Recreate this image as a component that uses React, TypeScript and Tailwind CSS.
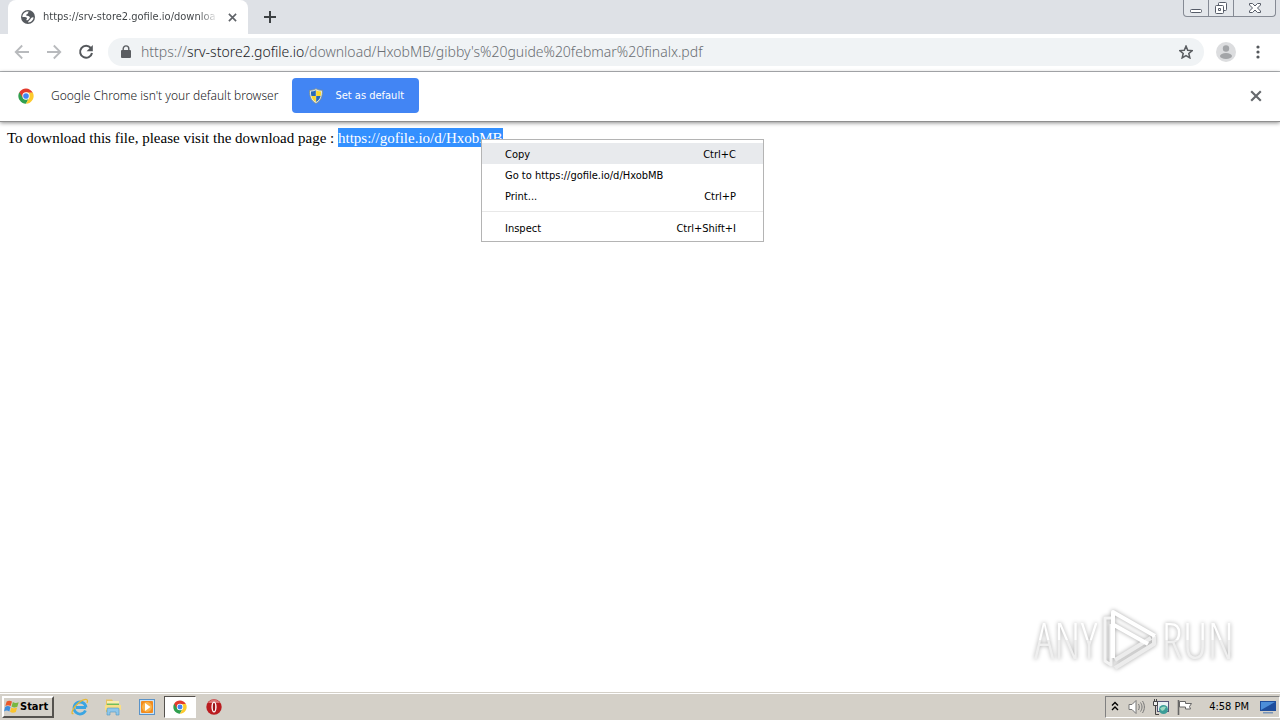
import React from "react";

const UI = "font-['DejaVu_Sans_Condensed','Noto_Sans',sans-serif]";

function ChromeLogo({ className }: { className: string }) {
  return (
    <svg viewBox="0 0 48 48" className={className} aria-hidden="true">
      <path d="M4.1 12.5A23 23 0 0 0 24 47L33.5 29.5 24 24Z" fill="#30a04f" />
      <path d="M43.9 12.5H24L33.5 29.5 24 47A23 23 0 0 0 43.9 12.5Z" fill="#fdca2e" />
      <path d="M4.1 12.5A23 23 0 0 1 43.9 13.5H24L14 29.5Z" fill="#e33b2e" />
      <circle cx="24" cy="24" r="11" fill="#fff" />
      <circle cx="24" cy="24" r="8.5" fill="#4285f4" />
    </svg>
  );
}

function Shield() {
  return (
    <svg viewBox="0 0 16 16" className="size-4" aria-hidden="true">
      <path d="M8 .6C6 2 4 2.3 1.6 2.2 1.2 8 3 13 8 15.5 13 13 14.8 8 14.4 2.2 12 2.3 10 2 8 .6Z" fill="#dfe7ea" stroke="#7c8b83" strokeWidth=".8" />
      <path d="M7.8 2.2C6.3 3 4.8 3.4 3 3.4c-.1 1.8 0 3.2.4 4.6h4.4Z" fill="#2868b8" />
      <path d="M8.2 2.2C9.7 3 11.2 3.4 13 3.4c.1 1.8 0 3.2-.4 4.6H8.2Z" fill="#fcd72b" />
      <path d="M3.4 8c.8 2.8 2 4.6 4.4 6V8Z" fill="#fcd72b" />
      <path d="M12.6 8c-.8 2.8-2 4.6-4.4 6V8Z" fill="#2868b8" />
    </svg>
  );
}

function Close({ className }: { className: string }) {
  return (
    <svg viewBox="0 0 10 10" className={className} fill="none" stroke="currentColor" strokeWidth="1.8" aria-hidden="true">
      <path d="m1 1 8 8M9 1 1 9" />
    </svg>
  );
}

function TabStrip() {
  return (
    <header className="flex h-[34px] items-start bg-[#dee1e6] pl-2 pr-1">
      <div className="flex h-[34px] w-60 items-center rounded-t-lg bg-white pl-3 pr-[11px]">
        <svg viewBox="0 0 16 16" className="size-4 shrink-0" aria-hidden="true">
          <circle cx="8" cy="8" r="7" fill="#565a5f" />
          <path d="M8.6 2.6C5.400 2 2.400 4.600 2.400 8c1.600.4 3.600-.2 4.400.8.6.8-.4 1.400-.4 2-.1.400.500.600.800.500 1.800-.3 1.300-2.300 2.800-2.400-.2-1.500-1.600-2.300-3.200-2.200-.9-.3-.8-1.200.1-1.500.8-.3 1.200-.7 1.100-1.400.1-.4.900-.5.600-1.200Z" fill="#fff" />
          <path d="M13.500 8.300c-1.300.3-1.700.1-2.500 1-.6.7-1 1.800-2 2.400-.6.400-.9.800-.7 1.800 3-.1 5.200-2.400 5.200-5.200Z" fill="#fff" />
        </svg>
        <span className={`ml-[7px] whitespace-nowrap bg-linear-to-r from-[#3c4043] from-90% to-[#3c4043]/10 bg-clip-text text-[11px] text-transparent ${UI}`}>
          https://srv-store2.gofile.io/downloa
        </span>
        <button aria-label="Close tab" className="ml-auto text-[#5f6368]"><Close className="size-[9px]" /></button>
      </div>
      <button aria-label="New tab" className="flex h-[34px] items-center pl-4 text-[#3c4043]">
        <svg viewBox="0 0 12 12" className="size-3" stroke="currentColor" strokeWidth="2"><path d="M6 0v12M0 6h12" /></svg>
      </button>
      <div className="ml-auto flex h-[17px] rounded-b border border-t-0 border-[#858a94] bg-[#e4e7eb] text-[#565c68]">
        <button aria-label="Minimize" className="flex w-[25px] items-center justify-center border-r border-[#858a94]">
          <svg viewBox="0 0 12 12" className="size-3" fill="#fff" stroke="currentColor"><rect x=".5" y="7.5" width="11" height="3" rx="1" /></svg>
        </button>
        <button aria-label="Restore" className="flex w-[25px] items-center justify-center border-r border-[#858a94]">
          <svg viewBox="0 0 14 14" className="size-[14px]" fill="#fff" stroke="currentColor"><rect x="4.5" y="1.5" width="8" height="8" rx="1" /><rect x="1.5" y="4.5" width="8" height="8" rx="1" /><path d="M4.5 7.5h2v2h-2z" /></svg>
        </button>
        <button aria-label="Close" className="flex w-[41px] items-center justify-center">
          <svg viewBox="0 0 14 12" className="h-3 w-[14px]" fill="#fff" stroke="currentColor"><path d="M1.500 1.500h3L7 4l2.500-2.500h3V3L9.500 6l3 3v1.500h-3L7 8l-2.500 2.500h-3V9l3-3-3-3Z" /></svg>
        </button>
      </div>
    </header>
  );
}

function Toolbar() {
  return (
    <nav className="flex h-[38px] items-center border-b border-[#b3b6b9] bg-white px-[14px] pb-px">
      <button aria-label="Back" className="text-[#b8babd]">
        <svg viewBox="0 0 16 16" className="size-4" fill="none" stroke="currentColor" strokeWidth="1.8"><path d="M15 8H2M8.200 1.500 1.700 8l6.500 6.500" /></svg>
      </button>
      <button aria-label="Forward" className="ml-4 text-[#b8babd]">
        <svg viewBox="0 0 16 16" className="size-4" fill="none" stroke="currentColor" strokeWidth="1.8"><path d="M1 8h13M7.800 1.500 14.300 8l-6.500 6.500" /></svg>
      </button>
      <button aria-label="Reload" className="ml-4 text-[#55585c]">
        <svg viewBox="0 0 16 16" className="size-4" fill="none" stroke="currentColor" strokeWidth="2"><path d="M12.800 4A6 6 0 1 0 14 9" /><path d="M14.800 1v6.200H8.600Z" fill="currentColor" stroke="none" /></svg>
      </button>
      <div className="ml-[14px] flex h-7 flex-1 items-center rounded-full bg-[#f0f3f5] pl-3 pr-[11px]">
        <svg viewBox="0 0 12 14" className="h-[14px] w-3 shrink-0" aria-hidden="true">
          <rect x="1" y="5" width="10" height="8" rx="1" fill="#5a5d61" />
          <path d="M3.200 6V3.700a2.800 2.800 0 0 1 5.600 0V6" fill="none" stroke="#5a5d61" strokeWidth="1.400" />
        </svg>
        <a href="#address" className="ml-[9px] whitespace-nowrap pb-px font-['Noto_Sans','Open_Sans',sans-serif] text-[14px] font-light text-[#6a6e73]">
          https://<span className="text-[#202124]">srv-store2.gofile.io</span>/download/HxobMB/gibby's%20guide%20febmar%20finalx.pdf
        </a>
        <button aria-label="Bookmark this page" className="ml-auto text-[#5a5d61]">
          <svg viewBox="1 1 22 22" className="size-[14px]" fill="none" stroke="currentColor" strokeWidth="2.400"><path d="m12 2.800 2.700 6.400 7 .6-5.300 4.600 1.600 6.800-6-3.600-6 3.600 1.600-6.800-5.300-4.600 7-.6Z" /></svg>
        </button>
      </div>
      <button aria-label="Profile" className="ml-3">
        <svg viewBox="0 0 20 20" className="size-5"><circle cx="10" cy="10" r="10" fill="#dcdddf" /><circle cx="10" cy="6.500" r="3.200" fill="#a3a5a8" /><ellipse cx="10" cy="14" rx="6" ry="3" fill="#a3a5a8" /></svg>
      </button>
      <button aria-label="Menu" className="ml-5">
        <svg viewBox="0 0 4 14" className="mr-[6px] h-[14px] w-1" fill="#55585c"><circle cx="2" cy="2" r="1.600" /><circle cx="2" cy="7" r="1.600" /><circle cx="2" cy="12" r="1.600" /></svg>
      </button>
    </nav>
  );
}

function InfoBar() {
  return (
    <section className={`relative flex h-[50px] items-center border-b border-[#8f8f8f] bg-white pb-[2px] pl-[18px] pr-[18px] shadow-[0_1px_4px_rgba(0,0,0,0.45)] ${UI}`}>
      <ChromeLogo className="size-4" />
      <span className="ml-[17px] whitespace-nowrap font-['Noto_Sans','Open_Sans',sans-serif] text-[12px] font-light text-[#202124]">Google Chrome isn't your default browser</span>
      <button className="ml-[14px] flex h-[35px] items-center rounded bg-[#4285f4] pl-4 pr-[15px] text-[11px] text-white">
        <Shield />
        <span className="ml-[11px] pt-[2px]">Set as default</span>
      </button>
      <button aria-label="Dismiss" className="ml-auto text-[#66696d]"><Close className="size-3" /></button>
    </section>
  );
}

function MenuItem({ label, keys, active }: { label: string; keys?: string; active?: boolean }) {
  return (
    <button role="menuitem" className={`flex h-[21px] w-full items-center justify-between pl-[23px] pr-[27px] pt-[2px] ${active ? "bg-[#e8eaed]" : ""}`}>
      <span>{label}</span>
      <span>{keys}</span>
    </button>
  );
}

function ContextMenu() {
  return (
    <div role="menu" className={`absolute left-[481px] top-[17px] w-[283px] border border-[#b4b4b4] bg-white py-[3px] text-[11px] leading-[19px] text-black ${UI}`}>
      <MenuItem label="Copy" keys="Ctrl+C" active />
      <MenuItem label="Go to https://gofile.io/d/HxobMB" />
      <MenuItem label="Print..." keys="Ctrl+P" />
      <div className="my-[5px] h-px bg-[#e8e8e8]" />
      <MenuItem label="Inspect" keys="Ctrl+Shift+I" />
    </div>
  );
}

function Watermark() {
  return (
    <div className="absolute bottom-5 right-[46px] flex items-center gap-1 font-['Noto_Sans_ExtraCondensed_Light','Open_Sans_Condensed_Light','Liberation_Sans_Narrow','Roboto_Condensed',sans-serif] text-[50px] leading-none drop-shadow-[0_0_2px_rgba(0,0,0,0.35)]">
      <span className="bg-linear-to-b from-white from-50% to-[#efefef] to-50% bg-clip-text text-transparent">ANY</span>
      <svg viewBox="0 0 56 64" className="h-16 w-[56px]" fill="none" strokeLinejoin="round" aria-hidden="true">
        <path d="M10 10H4v43l6 4V16" stroke="#f4f4f4" strokeWidth="3" />
        <path d="M14 60 53 36v-8M14 52l36-22" stroke="#ececec" strokeWidth="4" />
        <path d="M12 50V4l42 24M13 17l34 19" stroke="#fff" strokeWidth="4" />
      </svg>
      <span className="bg-linear-to-b from-white from-50% to-[#efefef] to-50% bg-clip-text text-transparent">RUN</span>
    </div>
  );
}

function Taskbar() {
  return (
    <footer className={`flex h-7 items-center border-t border-[#d4d0c8] bg-[#d4d0c8] pl-[2px] shadow-[inset_0_1px_0_#fff] ${UI}`}>
      <button className="flex h-[22px] w-[52px] items-center border-2 border-b-[#55524e] border-l-white border-r-[#55524e] border-t-white text-[11px] font-bold text-black">
        <svg viewBox="0 0 18 16" className="h-[15px] w-4 shrink-0" aria-hidden="true">
          <path d="M3 2.500c2-1.500 4-1.300 6 0L7.500 7.500c-2-1.200-4-1.300-6 0Z" fill="#e9592b" />
          <path d="M10 3c2 1.200 4 1.300 6.500.2L15 8.200c-2.500 1.200-4.500 1-6.500-.2Z" fill="#78b83f" />
          <path d="M1.300 8.500c2-1.300 4-1.200 6 0L6 13.500c-2-1.300-4-1.300-6 0Z" fill="#3d8ddd" />
          <path d="M8.300 9c2 1.200 4 1.300 6.500.2l-1.500 5c-2.500 1.200-4.500 1-6.500-.2Z" fill="#fbc42d" />
        </svg>
        <span className="pt-[2px]">Start</span>
      </button>
      <div className="ml-[17px] flex items-center">
        <button aria-label="Internet Explorer" className="w-4">
          <svg viewBox="0 0 18 18" className="size-[18px]" fill="none">
            <path d="M15 9.500H5M14.500 12.500A6 6 0 1 1 15 9.500" stroke="#3ba5e2" strokeWidth="2.800" />
            <path d="M2.500 15.500C-1 17 2 9 8 4.500S18 .5 16 5" stroke="#e6b936" strokeWidth="1.300" />
          </svg>
        </button>
        <button aria-label="File explorer" className="ml-[17px]">
          <svg viewBox="0 0 18 18" className="size-[18px]">
            <path d="M2 1.500h6l1 1.500h6v11H2Z" fill="#e8c45d" /><path d="M3 3h12v10H3Z" fill="#faedb1" /><path d="M3 5.500h12v2H3Z" fill="#72bd5c" /><path d="M1 7h16v5H1Z" fill="#f9df85" /><path d="M3 17v-6q0-1 1-1h10q1 0 1 1v6h-3v-3H6v3Z" fill="#8fc7ea" stroke="#4e98c5" strokeWidth=".6" />
          </svg>
        </button>
        <button aria-label="Media player" className="ml-4">
          <svg viewBox="0 0 18 18" className="size-[18px]">
            <rect x="1.500" y="1.500" width="15" height="15" fill="#c9e3f8" stroke="#5a93c8" /><rect x="3" y="3" width="12" height="12" rx="1" fill="#f28b1e" /><circle cx="9" cy="9" r="5" fill="#f9b249" /><path d="m7 5 5.500 4L7 13Z" fill="#fff" />
          </svg>
        </button>
        <button aria-label="Google Chrome" className="ml-2 flex h-[22px] w-8 items-center justify-center border border-b-white border-l-[#55524e] border-r-white border-t-[#55524e] bg-white">
          <ChromeLogo className="size-[14px]" />
        </button>
        <button aria-label="Opera" className="ml-[9px]">
          <svg viewBox="0 0 18 18" className="size-[18px]"><circle cx="9" cy="9" r="7.700" fill="#ba1c20" /><path d="M3 5a7 7 0 0 1 12 0Z" fill="#dc7675" /><ellipse cx="9" cy="9" rx="2.600" ry="5.500" fill="#fff" /><ellipse cx="9" cy="9" rx="1.200" ry="4.200" fill="#9c1519" /></svg>
        </button>
      </div>
      <div className="ml-auto flex h-[22px] items-center border border-b-white border-l-[#808080] border-r-white border-t-[#808080] pl-[5px] pr-[3px] text-[11px] text-black">
        <svg viewBox="0 0 8 10" className="mb-[2px] h-[10px] w-2" fill="none" stroke="#000" strokeWidth="1.400" aria-hidden="true"><path d="M1 4.500 4 1.500l3 3M1 9l3-3 3 3" /></svg>
        <svg viewBox="0 0 18 16" className="ml-[9px] h-4 w-[18px]" fill="none" stroke="#777" aria-hidden="true"><path d="M1 5.500h3L8 1.500v13l-4-4H1Z" fill="#fff" /><path d="M10.500 5c1 2 1 4 0 6M12.500 3.500c2 3 2 6 0 9M14.500 2c2.500 4 2.500 8 0 12" /></svg>
        <svg viewBox="0 0 18 18" className="ml-[6px] size-[18px]" aria-hidden="true"><rect x="5.500" y="3.500" width="11" height="10" fill="#e9f1f3" stroke="#557" /><path d="M3.500 6v10.500H7" fill="none" stroke="#444" /><path d="M1.500 3.500h4v4h-4ZM2.500 1v2M4.500 1v2" fill="#eee" stroke="#444" /><circle cx="11.500" cy="11.500" r="4.500" fill="#3b9d98" /><path d="M8 10.500q3-3 6-1.500-1 3-4 4Z" fill="#9bd8bf" /></svg>
        <svg viewBox="0 0 18 18" className="ml-[6px] size-[18px]" fill="#fff" stroke="#666" aria-hidden="true"><path d="M2.500 2v15" strokeWidth="1.600" /><path d="M3.500 3.500h6v2h6l-2 3 1 2.500h-5v-2h-6Z" /></svg>
        <time className="ml-[15px] whitespace-nowrap pt-[2px]">4:58 PM</time>
        <svg viewBox="0 0 16 14" className="ml-[11px] h-[14px] w-4" aria-hidden="true"><path d="M0 1h16v10H0Z" fill="#1f4e9d" /><path d="M1 2h14L1 10Z" fill="#4d8ed9" /><path d="M3 12h10v1.500H3Z" fill="#7995b8" /></svg>
      </div>
    </footer>
  );
}

export default function App() {
  return (
    <div className="flex min-h-screen flex-col bg-white">
      <TabStrip />
      <Toolbar />
      <InfoBar />
      <main className="relative flex-1 px-[7px] pt-[6px] font-['Liberation_Serif',serif] text-[15px] leading-[21px] text-black">
        <p>
          To download this file, please visit the download page :{" "}
          <a href="https://gofile.io/d/HxobMB" className="bg-[#3390ff] pb-px pt-[2px] text-white">https://gofile.io/d/HxobMB</a>
        </p>
        <ContextMenu />
        <Watermark />
      </main>
      <Taskbar />
    </div>
  );
}
